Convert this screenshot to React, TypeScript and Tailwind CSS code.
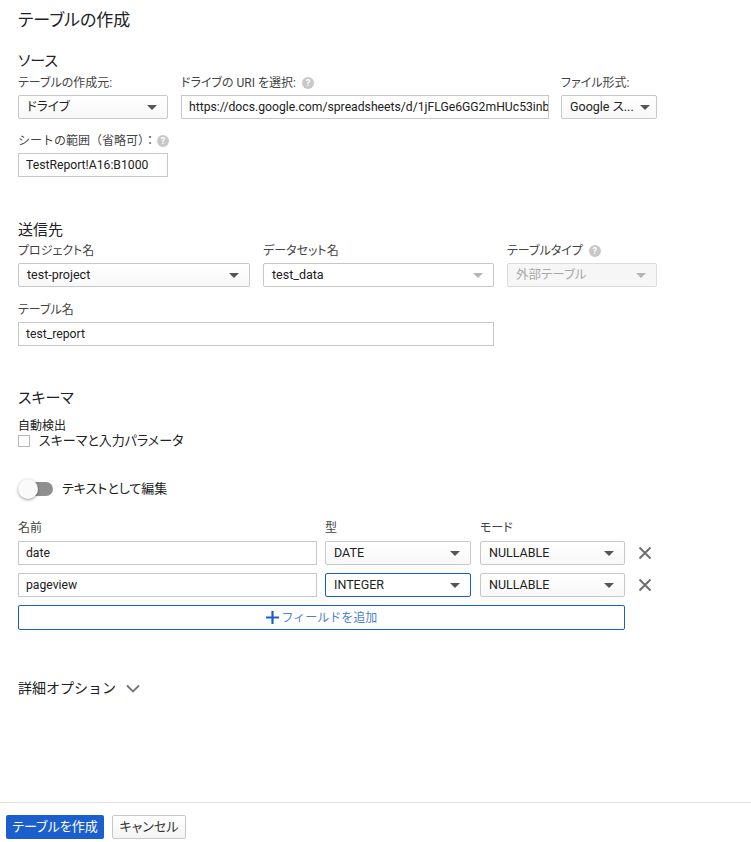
import { ReactNode } from "react";

const font = "font-['Roboto','Noto_Sans_CJK_JP',sans-serif] [font-feature-settings:'palt']";

const Caret = ({ light }: { light?: boolean }) => (
  <svg width="10" height="5" viewBox="0 0 10 5" className="ml-[6px] shrink-0">
    <path d="M0 0 L10 0 L5 5 Z" fill={light ? "#b5b5b5" : "#555"} />
  </svg>
);

const Help = ({ className = "ml-[6px]" }: { className?: string }) => (
  <span
    className={`inline-flex h-[12px] w-[12px] items-center justify-center rounded-full bg-[#c8c8c8] text-[9px] font-bold leading-none text-white ${className}`}
  >
    ?
  </span>
);

const Label = ({ children, className = "" }: { children: ReactNode; className?: string }) => (
  <div className={`flex h-[14px] items-center text-[12px] leading-[14px] text-[#444] ${className}`}>
    {children}
  </div>
);

const Select = ({
  value,
  className = "",
  disabled,
  focused,
  lightCaret,
}: {
  value: string;
  className?: string;
  disabled?: boolean;
  focused?: boolean;
  lightCaret?: boolean;
}) => (
  <div
    className={`flex h-[24px] items-center justify-between rounded-[2px] border pl-[8px] pr-[10px] text-[12.5px] ${
      disabled
        ? "border-[#dcdcdc] bg-[#f6f6f6] text-[#a8a8a8]"
        : focused
        ? "border-[#1a5fcf] bg-white text-[#212121]"
        : "border-[#c8c8c8] bg-gradient-to-b from-white to-[#f8f8f8] text-[#212121]"
    } ${className}`}
  >
    <span className="whitespace-nowrap">{value}</span>
    <Caret light={disabled || lightCaret} />
  </div>
);

const Input = ({ value, className = "" }: { value: string; className?: string }) => (
  <div
    className={`flex h-[24px] items-center overflow-hidden whitespace-nowrap border border-[#c8c8c8] bg-white pl-[7px] text-[12.2px] text-[#212121] ${className}`}
  >
    {value}
  </div>
);

const Close = () => (
  <svg width="14" height="14" viewBox="0 0 14 14" className="ml-[13px]">
    <path d="M1.5 1.5 L12.5 12.5 M12.5 1.5 L1.5 12.5" stroke="#6f6f6f" strokeWidth="2" />
  </svg>
);

const Heading = ({ children, className = "" }: { children: ReactNode; className?: string }) => (
  <h2 className={`h-[20px] text-[15px] leading-[20px] text-[#212121] ${className}`}>{children}</h2>
);

export default function App() {
  return (
    <div className={`flex min-h-[842px] flex-col bg-white ${font}`}>
      <main className="flex-1 pl-[18px]">
        <h1 className="mt-[10px] h-[20px] text-[17px] leading-[20px] text-[#212121]">テーブルの作成</h1>

        {/* Source */}
        <Heading className="mt-[21px]">ソース</Heading>
        <div className="mt-[5px] flex">
          <div className="w-[150px]">
            <Label>テーブルの作成元:</Label>
            <Select value="ドライブ" className="mt-[5px] w-[150px]" />
          </div>
          <div className="ml-[13px] w-[368px]">
            <Label>
              ドライブの URI を選択:
              <Help />
            </Label>
            <Input
              value="https://docs.google.com/spreadsheets/d/1jFLGe6GG2mHUc53inbXyZ"
              className="mt-[5px] w-[368px]"
            />
          </div>
          <div className="ml-[12px] w-[96px]">
            <Label>ファイル形式:</Label>
            <Select value="Google ス..." className="mt-[5px] w-[96px]" />
          </div>
        </div>
        <Label className="mt-[15px] [font-feature-settings:normal]">
          シートの範囲（省略可）：
          <Help className="ml-[1px]" />
        </Label>
        <Input value="TestReport!A16:B1000" className="mt-[5px] w-[150px]" />

        {/* Destination */}
        <Heading className="mt-[43px]">送信先</Heading>
        <div className="mt-[4px] flex">
          <div className="w-[232px]">
            <Label>プロジェクト名</Label>
            <Select value="test-project" className="mt-[5px] w-[232px]" />
          </div>
          <div className="ml-[13px] w-[231px]">
            <Label>データセット名</Label>
            <Select value="test_data" lightCaret className="mt-[5px] w-[231px] !bg-white !bg-none" />
          </div>
          <div className="ml-[13px] w-[150px]">
            <Label>
              テーブルタイプ
              <Help />
            </Label>
            <Select value="外部テーブル" disabled className="mt-[5px] w-[150px]" />
          </div>
        </div>
        <Label className="mt-[16px]">テーブル名</Label>
        <Input value="test_report" className="mt-[5px] w-[476px]" />

        {/* Schema */}
        <Heading className="mt-[42px]">スキーマ</Heading>
        <div className="mt-[11px] h-[14px] text-[12px] leading-[14px] text-[#212121]">自動検出</div>
        <label className="flex h-[16px] items-center text-[13px] text-[#212121]">
          <span className="mr-[9px] h-[12px] w-[12px] border border-[#b5b5b5] bg-white" />
          スキーマと入力パラメータ
        </label>

        <div className="mt-[30px] flex h-[20px] items-center">
          <div className="relative h-[20px] w-[36px]">
            <div className="absolute left-[6px] top-[3px] h-[14px] w-[29px] rounded-full bg-[#8f8f8f]" />
            <div className="absolute left-0 top-0 h-[20px] w-[20px] rounded-full bg-[#fafafa] shadow-[0_1px_3px_rgba(0,0,0,0.4)]" />
          </div>
          <span className="ml-[8px] text-[13px] text-[#212121]">テキストとして編集</span>
        </div>

        <div className="mt-[22px] flex">
          <Label className="w-[307px]">名前</Label>
          <Label className="w-[155px]">型</Label>
          <Label>モード</Label>
        </div>
        <div className="mt-[6px] flex flex-col gap-[8px]">
          <div className="flex items-center">
            <Input value="date" className="w-[299px]" />
            <Select value="DATE" className="ml-[8px] w-[146px]" />
            <Select value="NULLABLE" className="ml-[9px] w-[145px]" />
            <Close />
          </div>
          <div className="flex items-center">
            <Input value="pageview" className="w-[299px]" />
            <Select value="INTEGER" focused className="ml-[8px] w-[146px]" />
            <Select value="NULLABLE" className="ml-[9px] w-[145px]" />
            <Close />
          </div>
          <button className="flex h-[25px] w-[607px] items-center justify-center rounded-[2px] border border-[#1a5fcf] bg-white text-[12px] text-[#4c7fd6] [font-feature-settings:normal]">
            <svg width="13" height="13" viewBox="0 0 13 13" className="mr-[3px]">
              <path d="M6.5 0 V13 M0 6.5 H13" stroke="#1a5fcf" strokeWidth="2.2" />
            </svg>
            フィールドを追加
          </button>
        </div>

        <div className="mt-[48px] flex h-[20px] items-center text-[14px] text-[#212121] [font-feature-settings:normal]">
          詳細オプション
          <svg width="14" height="9" viewBox="0 0 14 9" className="ml-[10px]">
            <path d="M1 1.5 L7 7.5 L13 1.5" stroke="#757575" strokeWidth="1.8" fill="none" />
          </svg>
        </div>
      </main>

      <footer className="flex h-[40px] items-start gap-[8px] border-t border-[#e0e0e0] pl-[6px] pt-[12px]">
        <button className="h-[24px] w-[98px] rounded-[2px] bg-[#1b5fcd] text-[13px] text-white">テーブルを作成</button>
        <button className="h-[24px] w-[74px] rounded-[2px] border border-[#c8c8c8] bg-gradient-to-b from-white to-[#f4f4f4] text-[13px] text-[#333]">
          キャンセル
        </button>
      </footer>
    </div>
  );
}
